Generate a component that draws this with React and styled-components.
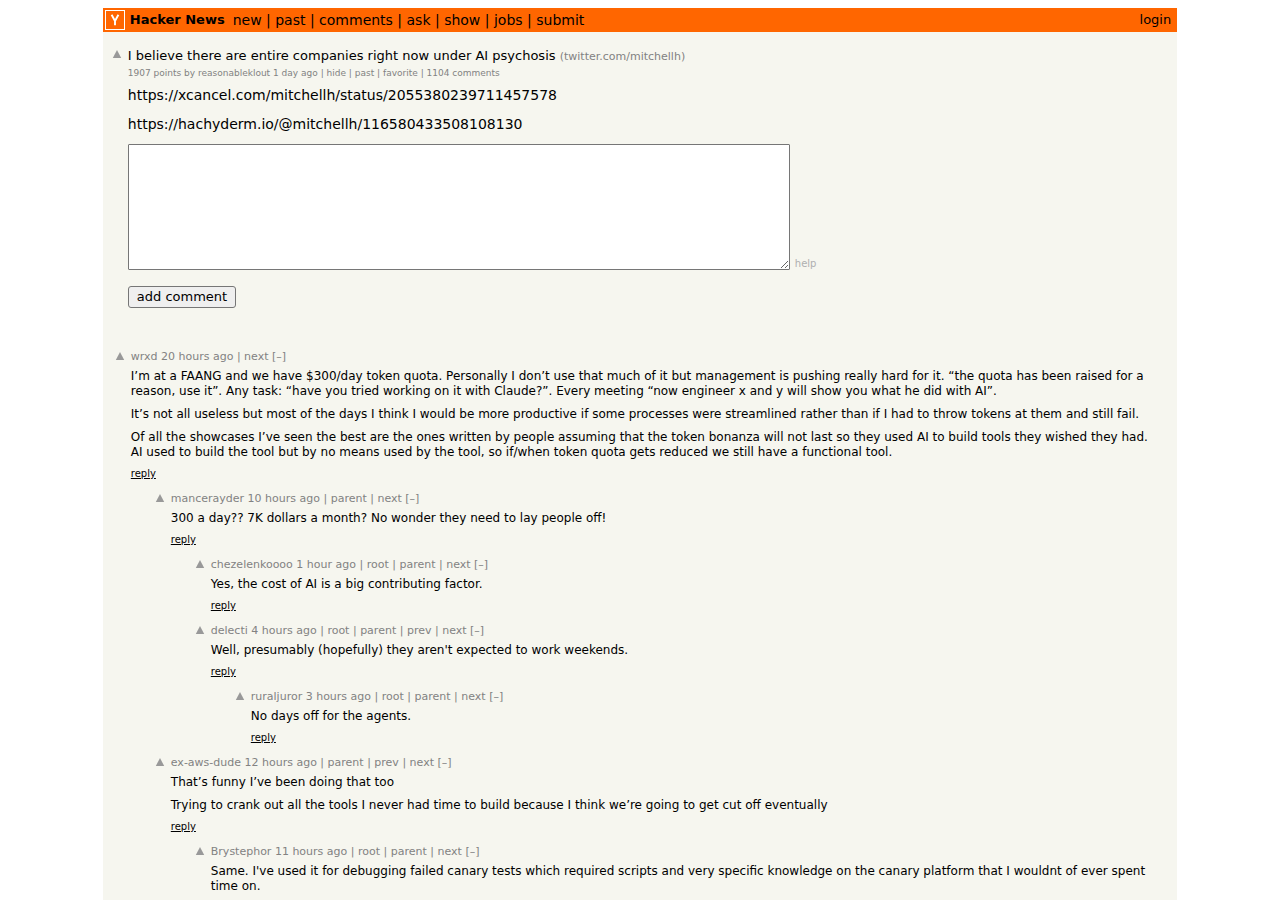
import React from "react";
import styled, { createGlobalStyle } from "styled-components";

const GlobalStyle = createGlobalStyle`
  * { box-sizing: border-box; }
  body {
    margin: 0;
    background: #ffffff;
    color: #000000;
    font-family: Verdana, "DejaVu Sans", Geneva, sans-serif;
    font-size: 13px;
  }
  p { margin: 0; }
`;

const Page = styled.div`
  display: flex;
  flex-direction: column;
  min-height: 100vh;
  padding: 8px 8px 0;
`;

const Main = styled.main`
  flex: 1;
  width: 85%;
  margin: 0 auto;
  background: #f6f6ef;
`;

const TopBar = styled.header`
  display: flex;
  align-items: center;
  height: 24px;
  padding: 2px 6px 2px 2px;
  background: #ff6600;
  line-height: 16px;
`;

const Logo = styled.a`
  display: flex;
  margin-right: 5px;
`;

const Brand = styled.a`
  margin-right: 8px;
  color: #000000;
  font-weight: bold;
  text-decoration: none;
`;

const Nav = styled.nav`
  flex: 1;
  font-size: 14px;
  white-space: pre;
`;

const PlainLink = styled.a`
  color: inherit;
  text-decoration: none;
`;

const Story = styled.section`
  display: grid;
  grid-template-columns: 10px minmax(0, 1fr);
  column-gap: 6px;
  padding: 14px 9px 0;
`;

const Vote = styled.button`
  display: flex;
  width: 10px;
  height: 10px;
  margin: ${(p) => p.$top}px 0 0;
  padding: 0;
  border: 0;
  background: none;
`;

const Title = styled.h1`
  margin: 0;
  font-size: 13px;
  font-weight: normal;
  line-height: 19px;
`;

const Site = styled.span`
  color: #828282;
  font-size: 11px;
`;

const Subtext = styled.div`
  color: #828282;
  font-size: 9px;
  line-height: 15px;
`;

const StoryText = styled.div`
  display: grid;
  row-gap: 13px;
  padding-top: 6px;
  font-size: 14px;
  line-height: 16px;
`;

const CommentForm = styled.form`
  padding-top: 12px;
`;

const Editor = styled.div`
  display: flex;
  align-items: flex-end;
  gap: 5px;
`;

const TextBox = styled.textarea`
  width: 662px;
  max-width: 90%;
  height: 126px;
  padding: 2px;
  border: 1px solid #767676;
  border-radius: 1px;
  background: #ffffff;
  font-family: "Liberation Mono", monospace;
  font-size: 13px;
`;

const Help = styled.a`
  color: #afafaf;
  font-size: 10px;
  line-height: 12px;
  text-decoration: none;
`;

const SubmitButton = styled.button`
  display: block;
  height: 22px;
  margin-top: 16px;
  padding: 0 8px;
  border: 1px solid #767676;
  border-radius: 3px;
  background: #efefef;
  color: #000000;
  font-family: inherit;
  font-size: 13px;
  line-height: 20px;
`;

const Comments = styled.section`
  padding: 42px 16px 0 12px;
`;

const CommentRow = styled.article`
  display: grid;
  grid-template-columns: 10px minmax(0, 1fr);
  column-gap: 6px;
  padding-left: ${(p) => p.$level * 40}px;
`;

const CommentHead = styled.div`
  color: #828282;
  font-size: 11px;
  line-height: 14px;
`;

const CommentBody = styled.div`
  display: grid;
  row-gap: 8px;
  padding-top: 5px;
  font-size: 12px;
  line-height: 15px;
`;

const Reply = styled.div`
  padding: 7px 0 11px;
  font-size: 10px;
  line-height: 14px;
`;

const ReplyLink = styled.a`
  color: #000000;
`;

const sections = ["new", "past", "comments", "ask", "show", "jobs", "submit"];

const comments = [
  {
    user: "wrxd", age: "20 hours ago", level: 0, links: ["next"],
    text: [
      "I’m at a FAANG and we have $300/day token quota. Personally I don’t use that much of it but management is pushing really hard for it. “the quota has been raised for a reason, use it”. Any task: “have you tried working on it with Claude?”. Every meeting “now engineer x and y will show you what he did with AI”.",
      "It’s not all useless but most of the days I think I would be more productive if some processes were streamlined rather than if I had to throw tokens at them and still fail.",
      "Of all the showcases I’ve seen the best are the ones written by people assuming that the token bonanza will not last so they used AI to build tools they wished they had. AI used to build the tool but by no means used by the tool, so if/when token quota gets reduced we still have a functional tool.",
    ],
  },
  {
    user: "mancerayder", age: "10 hours ago", level: 1, links: ["parent", "next"],
    text: ["300 a day?? 7K dollars a month? No wonder they need to lay people off!"],
  },
  {
    user: "chezelenkoooo", age: "1 hour ago", level: 2, links: ["root", "parent", "next"],
    text: ["Yes, the cost of AI is a big contributing factor."],
  },
  {
    user: "delecti", age: "4 hours ago", level: 2, links: ["root", "parent", "prev", "next"],
    text: ["Well, presumably (hopefully) they aren't expected to work weekends."],
  },
  {
    user: "ruraljuror", age: "3 hours ago", level: 3, links: ["root", "parent", "next"],
    text: ["No days off for the agents."],
  },
  {
    user: "ex-aws-dude", age: "12 hours ago", level: 1, links: ["parent", "prev", "next"],
    text: [
      "That’s funny I’ve been doing that too",
      "Trying to crank out all the tools I never had time to build because I think we’re going to get cut off eventually",
    ],
  },
  {
    user: "Brystephor", age: "11 hours ago", level: 2, links: ["root", "parent", "next"], last: true,
    text: [
      "Same. I've used it for debugging failed canary tests which required scripts and very specific knowledge on the canary platform that I wouldnt of ever spent time on.",
    ],
  },
];

function UpVote({ top }) {
  return (
    <Vote type="button" aria-label="upvote" $top={top}>
      <svg width="10" height="10" viewBox="0 0 10 10" aria-hidden="true">
        <path d="M5 1 L9.2 9 H0.8 Z" fill="#999999" />
      </svg>
    </Vote>
  );
}

function Comment({ user, age, level, links, text, last }) {
  return (
    <CommentRow $level={level}>
      <UpVote top={1} />
      <div>
        <CommentHead>
          <PlainLink href="#">{user}</PlainLink> <PlainLink href="#">{age}</PlainLink>
          {links.map((link) => (
            <React.Fragment key={link}> | <PlainLink href="#">{link}</PlainLink></React.Fragment>
          ))}{" "}
          <PlainLink href="#">[–]</PlainLink>
        </CommentHead>
        <CommentBody>
          {text.map((t) => <p key={t}>{t}</p>)}
        </CommentBody>
        {!last && <Reply><ReplyLink href="#">reply</ReplyLink></Reply>}
      </div>
    </CommentRow>
  );
}

export default function App() {
  return (
    <>
      <GlobalStyle />
      <Page>
        <Main>
          <TopBar>
            <Logo href="#" aria-label="Home">
              <svg width="20" height="20" viewBox="0 0 20 20" aria-hidden="true">
                <rect x="0.5" y="0.5" width="19" height="19" fill="#ff6600" stroke="#ffffff" />
                <path d="M6.6 4.8 L10 11 L13.4 4.8 M10 10.5 V15.2" fill="none" stroke="#ffffff" strokeWidth="1.9" />
              </svg>
            </Logo>
            <Brand href="#">Hacker News</Brand>
            <Nav>
              {sections.map((name, i) => (
                <React.Fragment key={name}>
                  {i > 0 && " | "}
                  <PlainLink href="#">{name}</PlainLink>
                </React.Fragment>
              ))}
            </Nav>
            <PlainLink href="#">login</PlainLink>
          </TopBar>
          <Story>
            <UpVote top={3} />
            <div>
              <Title>
                <PlainLink href="#">I believe there are entire companies right now under AI psychosis</PlainLink>{" "}
                <Site>(<PlainLink href="#">twitter.com/mitchellh</PlainLink>)</Site>
              </Title>
              <Subtext>
                1907 points by <PlainLink href="#">reasonableklout</PlainLink> <PlainLink href="#">1 day ago</PlainLink>
                {["hide", "past", "favorite", "1104 comments"].map((link) => (
                  <React.Fragment key={link}> | <PlainLink href="#">{link}</PlainLink></React.Fragment>
                ))}
              </Subtext>
              <StoryText>
                <PlainLink href="#">https://xcancel.com/mitchellh/status/2055380239711457578</PlainLink>
                <PlainLink href="#">https://hachyderm.io/@mitchellh/116580433508108130</PlainLink>
              </StoryText>
              <CommentForm onSubmit={(e) => e.preventDefault()}>
                <Editor>
                  <TextBox aria-label="Comment" />
                  <Help href="#">help</Help>
                </Editor>
                <SubmitButton type="submit">add comment</SubmitButton>
              </CommentForm>
            </div>
          </Story>
          <Comments>
            {comments.map((c) => <Comment key={c.user} {...c} />)}
          </Comments>
        </Main>
      </Page>
    </>
  );
}
